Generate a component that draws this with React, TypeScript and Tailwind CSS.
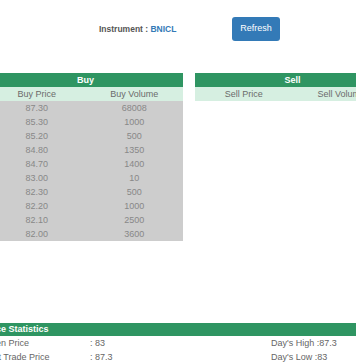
const buyRows = [
  ["87.30", "68008"],
  ["85.30", "1000"],
  ["85.20", "500"],
  ["84.80", "1350"],
  ["84.70", "1400"],
  ["83.00", "10"],
  ["82.30", "500"],
  ["82.20", "1000"],
  ["82.10", "2500"],
  ["82.00", "3600"],
];

function Book({ title, cols, rows }: { title: string; cols: string[]; rows: string[][] }) {
  return (
    <div className="w-[195px]">
      <div className="h-[14px] bg-[#2f9562] text-white font-bold text-[9px] leading-[14px] text-center">
        {title}
      </div>
      <div className="grid grid-cols-2 h-[14px] bg-[#d6efe1] text-[#6b6b6b] text-[9px] leading-[14px] text-center">
        {cols.map((c) => (
          <div key={c}>{c}</div>
        ))}
      </div>
      {rows.length > 0 && (
        <div className="bg-[#cdcdcd]">
          {rows.map((r, i) => (
            <div key={i} className="grid grid-cols-2 h-[14px] text-[#888] text-[9px] leading-[14px] text-center">
              <div>{r[0]}</div>
              <div>{r[1]}</div>
            </div>
          ))}
        </div>
      )}
    </div>
  );
}

export default function App() {
  return (
    <div className="w-[356px] h-[364px] overflow-hidden bg-white font-['Liberation_Sans',Arial,sans-serif]">
      <div className="ml-[-16px] w-[420px]">
        <div className="flex items-center pt-[17px] pl-[115px]">
          <div className="w-[133px] text-[8.5px] font-bold text-[#555]">
            Instrument : <span className="text-[#337ab7]">BNICL</span>
          </div>
          <button className="w-[48px] h-[24px] rounded-[3px] bg-[#337ab7] text-white text-[9px]">
            Refresh
          </button>
        </div>

        <div className="flex gap-[12px] mt-[32px] ml-[4px]">
          <Book title="Buy" cols={["Buy Price", "Buy Volume"]} rows={buyRows} />
          <Book title="Sell" cols={["Sell Price", "Sell Volume"]} rows={[]} />
        </div>

        <div className="mt-[82px]">
          <div className="h-[13px] bg-[#2f9562] text-white font-bold text-[9px] leading-[13px]">
            Price Statistics
          </div>
          <div className="text-[9px] text-[#666]">
            {[
              ["Open Price", ": 83", "Day's High :87.3"],
              ["Last Trade Price", ": 87.3", "Day's Low :83"],
            ].map((r) => (
              <div key={r[0]} className="flex h-[14px] leading-[14px]">
                <div className="w-[106px]">{r[0]}</div>
                <div className="w-[181px]">{r[1]}</div>
                <div>{r[2]}</div>
              </div>
            ))}
          </div>
        </div>
      </div>
    </div>
  );
}
